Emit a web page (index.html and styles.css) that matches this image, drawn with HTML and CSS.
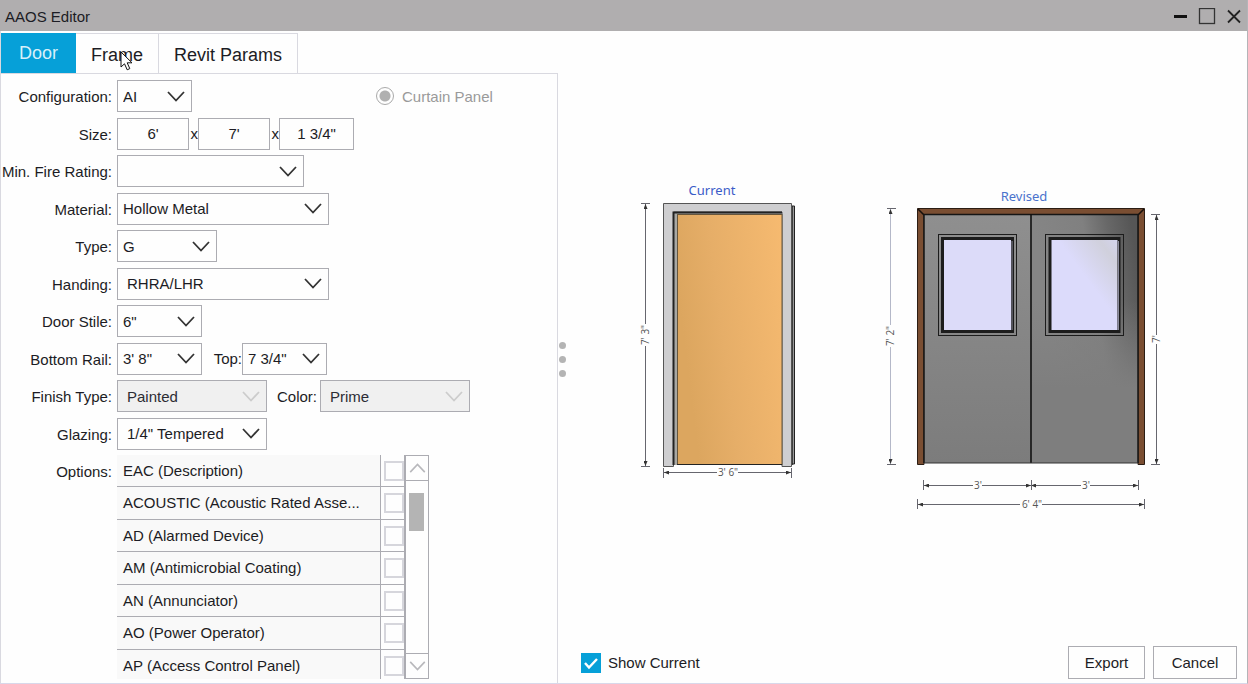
FILE: index.html
```html
<!DOCTYPE html>
<html lang="en">
<head>
    <meta charset="UTF-8">
    <meta name="viewport" content="width=device-width, initial-scale=1.0">
    <title>AAOS Editor</title>
    <link rel="stylesheet" href="styles.css">
</head>
<body>
    <svg class="defs" width="0" height="0" aria-hidden="true">
        <symbol id="chevron" viewBox="0 0 18 11">
            <path d="M1 1 L9 9.5 L17 1" fill="none" stroke="currentColor" stroke-width="1.8"/>
        </symbol>
        <symbol id="tick" viewBox="0 0 20 20">
            <path d="M4 10 L8 14.5 L16 6" fill="none" stroke="#fff" stroke-width="2.4"/>
        </symbol>
    </svg>

    <div class="window">
        <header class="titlebar">
            <h1>AAOS Editor</h1>
            <div class="window-buttons">
                <button type="button" aria-label="Minimize"><svg width="18" height="18" viewBox="0 0 18 18"><path d="M3 8.500H16" stroke="#111" stroke-width="3"/></svg></button>
                <button type="button" aria-label="Maximize"><svg width="18" height="18" viewBox="0 0 18 18"><rect x="1.5" y="0.5" width="15" height="15" fill="none" stroke="#333" stroke-width="1.3"/></svg></button>
                <button type="button" aria-label="Close"><svg width="18" height="18" viewBox="0 0 18 18"><path d="M3 2.500L15 14.500M15 2.500L3 14.500" stroke="#222" stroke-width="1.8"/></svg></button>
            </div>
        </header>

        <main class="content">
            <section class="editor">
                <nav class="tabs">
                    <button type="button" class="tab active">Door</button>
                    <button type="button" class="tab">Frame</button>
                    <button type="button" class="tab">Revit Params</button>
                </nav>

                <form class="door-form">
                    <label class="name" for="configuration">Configuration:</label>
                    <div class="field">
                        <div class="select w-xs"><select id="configuration"><option>AI</option></select><svg><use href="#chevron"/></svg></div>
                        <label class="radio"><input type="radio" name="panel" checked disabled>Curtain Panel</label>
                    </div>

                    <label class="name" for="width">Size:</label>
                    <div class="field">
                        <input class="size" type="text" id="width" value="6'">
                        <span class="times">x</span>
                        <input class="size" type="text" aria-label="Height" value="7'">
                        <span class="times">x</span>
                        <input class="size w-xs" type="text" aria-label="Thickness" value="1 3/4&quot;">
                    </div>

                    <label class="name" for="fire">Min. Fire Rating:</label>
                    <div class="field">
                        <div class="select w-lg"><select id="fire"><option></option></select><svg><use href="#chevron"/></svg></div>
                    </div>

                    <label class="name" for="material">Material:</label>
                    <div class="field">
                        <div class="select w-xl"><select id="material"><option>Hollow Metal</option></select><svg><use href="#chevron"/></svg></div>
                    </div>

                    <label class="name" for="type">Type:</label>
                    <div class="field">
                        <div class="select w-md"><select id="type"><option>G</option></select><svg><use href="#chevron"/></svg></div>
                    </div>

                    <label class="name" for="handing">Handing:</label>
                    <div class="field">
                        <div class="select indent w-xl"><select id="handing"><option>RHRA/LHR</option></select><svg><use href="#chevron"/></svg></div>
                    </div>

                    <label class="name" for="stile">Door Stile:</label>
                    <div class="field">
                        <div class="select w-sm"><select id="stile"><option>6"</option></select><svg><use href="#chevron"/></svg></div>
                    </div>

                    <label class="name" for="rail">Bottom Rail:</label>
                    <div class="field">
                        <div class="select w-sm"><select id="rail"><option>3' 8"</option></select><svg><use href="#chevron"/></svg></div>
                        <label class="second top" for="top">Top:</label>
                        <div class="select w-sm"><select id="top"><option>7 3/4"</option></select><svg><use href="#chevron"/></svg></div>
                    </div>

                    <label class="name" for="finish">Finish Type:</label>
                    <div class="field">
                        <div class="select indent disabled w-fin"><select id="finish" disabled><option>Painted</option></select><svg><use href="#chevron"/></svg></div>
                        <label class="second color" for="color">Color:</label>
                        <div class="select indent disabled w-fin"><select id="color" disabled><option>Prime</option></select><svg><use href="#chevron"/></svg></div>
                    </div>

                    <label class="name" for="glazing">Glazing:</label>
                    <div class="field">
                        <div class="select indent w-fin"><select id="glazing"><option>1/4" Tempered</option></select><svg><use href="#chevron"/></svg></div>
                    </div>

                    <span class="name">Options:</span>
                    <div class="options">
                        <ul>
                            <li><label for="o1">EAC (Description)</label><input type="checkbox" id="o1"></li>
                            <li><label for="o2">ACOUSTIC (Acoustic Rated Asse...</label><input type="checkbox" id="o2"></li>
                            <li><label for="o3">AD (Alarmed Device)</label><input type="checkbox" id="o3"></li>
                            <li><label for="o4">AM (Antimicrobial Coating)</label><input type="checkbox" id="o4"></li>
                            <li><label for="o5">AN (Annunciator)</label><input type="checkbox" id="o5"></li>
                            <li><label for="o6">AO (Power Operator)</label><input type="checkbox" id="o6"></li>
                            <li><label for="o7">AP (Access Control Panel)</label><input type="checkbox" id="o7"></li>
                        </ul>
                        <div class="scrollbar">
                            <button type="button" class="up" aria-label="Scroll up"><svg><use href="#chevron"/></svg></button>
                            <div class="track"><div class="thumb"></div></div>
                            <button type="button" class="down" aria-label="Scroll down"><svg><use href="#chevron"/></svg></button>
                        </div>
                    </div>
                </form>
            </section>

            <div class="splitter"><i></i><i></i><i></i></div>

            <section class="preview">
                <svg class="drawing" width="536" height="340" viewBox="634 175 536 340" role="img" aria-label="Current and revised door">
                    <defs>
                        <linearGradient id="wood" x1="0" y1="0.3" x2="1" y2="0">
                            <stop offset="0" stop-color="#dca65f"/>
                            <stop offset="0.35" stop-color="#e6ae68"/>
                            <stop offset="1" stop-color="#f6ba70"/>
                        </linearGradient>
                        <linearGradient id="steel" x1="0" y1="0" x2="0" y2="1">
                            <stop offset="0" stop-color="#8f8f8f"/>
                            <stop offset="1" stop-color="#7c7c7c"/>
                        </linearGradient>
                        <linearGradient id="shade" x1="0.2" y1="0.5" x2="1" y2="0.2">
                            <stop offset="0" stop-color="#858585"/>
                            <stop offset="0.5" stop-color="#808080"/>
                            <stop offset="0.75" stop-color="#686868"/>
                            <stop offset="1" stop-color="#565656"/>
                        </linearGradient>
                        <linearGradient id="fade" x1="0" y1="0" x2="0" y2="1">
                            <stop offset="0.35" stop-color="#808080" stop-opacity="0"/>
                            <stop offset="0.7" stop-color="#7e7e7e"/>
                        </linearGradient>
                        <linearGradient id="glass" x1="0" y1="1" x2="1" y2="0">
                            <stop offset="0.55" stop-color="#dcdbfb"/>
                            <stop offset="0.85" stop-color="#d0d0dc"/>
                            <stop offset="1" stop-color="#d4d4f0"/>
                        </linearGradient>
                        <marker id="arrow" viewBox="0 0 5 4" refX="5" refY="2" markerWidth="5" markerHeight="4" markerUnits="userSpaceOnUse" orient="auto-start-reverse">
                            <path d="M0 0L5 2L0 4z" fill="#333"/>
                        </marker>
                    </defs>

                    <!-- current door -->
                    <text class="caption" x="712" y="195">Current</text>
                    <path d="M791 206H794.5V464H791z" fill="#999" stroke="#222"/>
                    <path d="M792 206V465" stroke="#222" stroke-width="1.5"/>
                    <path d="M663.5 203.5H791.5V466.5H782V212H673.5V466.5H663.5z" fill="#ceced0" stroke="#555"/>
                    <rect x="674" y="212" width="108" height="253" fill="#a8a8a4"/>
                    <path d="M673.5 465V212.5H782" fill="none" stroke="#222" stroke-width="2"/>
                    <rect x="677.5" y="214.5" width="104.5" height="250" fill="url(#wood)" stroke="#66563d"/>
                    <path d="M677 464.5H782" stroke="#222"/>

                    <g class="dim">
                        <path d="M645.5 204V324" marker-start="url(#arrow)"/>
                        <path d="M645.5 346V466" marker-end="url(#arrow)"/>
                        <path d="M641 203.5H650M641 466.5H650"/>
                        <path d="M664 472.5H717" marker-start="url(#arrow)"/>
                        <path d="M738 472.5H791" marker-end="url(#arrow)"/>
                        <path d="M663.5 468V478M791.5 468V478"/>
                    </g>
                    <text class="measure" transform="translate(649 335) rotate(-90)">7' 3"</text>
                    <text class="measure" x="728" y="476">3' 6"</text>

                    <!-- revised door -->
                    <text class="caption light" x="1024" y="201">Revised</text>
                    <path d="M917.5 208.5H1144.5V464.5H1138V214.5H924V464.5H917.5z" fill="#7a4e32" stroke="#2b1d14"/>
                    <path d="M918 209L924 215M1144 209L1138 215" stroke="#17100b" stroke-width="1.5"/>
                    <rect x="924" y="214.5" width="107" height="248.5" fill="url(#steel)"/>
                    <rect x="1031" y="214.5" width="107" height="248.5" fill="url(#shade)"/>
                    <rect x="1031" y="214.5" width="107" height="248.5" fill="url(#fade)"/>
                    <path d="M924 463V214.5H1138V463" fill="none" stroke="#151515" stroke-width="1.5"/>
                    <path d="M1031 214V463" stroke="#111" stroke-width="1.6"/>
                    <path d="M924 463H1138" stroke="#333"/>
                    <g fill="none" stroke="#1c1c1c">
                        <rect x="938.5" y="234.5" width="78" height="101"/>
                        <rect x="1045.5" y="234.5" width="78" height="101"/>
                        <rect x="942.5" y="238.5" width="70" height="93" fill="#dcdbf9" stroke-width="3"/>
                        <rect x="1050" y="238.5" width="69" height="93" fill="url(#glass)" stroke-width="3"/>
                    </g>
                    <path d="M1012 241V330M1118.5 241V330" stroke="#8b8b9c"/>

                    <g class="dim pale">
                        <path d="M890.5 209V325" marker-start="url(#arrow)"/>
                        <path d="M890.5 347V464" marker-end="url(#arrow)"/>
                    </g>
                    <g class="dim">
                        <path d="M887 208.5H896M887 464.5H896"/>
                        <path d="M1156.5 215V335" marker-start="url(#arrow)"/>
                        <path d="M1156.5 344V464" marker-end="url(#arrow)"/>
                        <path d="M1151 214.5H1160M1151 464.5H1160"/>
                        <path d="M924 485.5H973" marker-start="url(#arrow)"/>
                        <path d="M982 485.5H1031" marker-end="url(#arrow)"/>
                        <path d="M1031 485.5H1081" marker-start="url(#arrow)"/>
                        <path d="M1090 485.5H1138" marker-end="url(#arrow)"/>
                        <path d="M923.5 480V490M1031.5 480V490M1138.5 480V490"/>
                        <path d="M918 504.5H1020" marker-start="url(#arrow)"/>
                        <path d="M1042 504.5H1144" marker-end="url(#arrow)"/>
                        <path d="M917.5 499V509M1144.5 499V509"/>
                    </g>
                    <text class="measure" transform="translate(894 336) rotate(-90)">7' 2"</text>
                    <text class="measure" transform="translate(1160 339) rotate(-90)">7'</text>
                    <text class="measure" x="978" y="489">3'</text>
                    <text class="measure" x="1086" y="489">3'</text>
                    <text class="measure" x="1032" y="508">6' 4"</text>
                </svg>

                <footer class="actions">
                    <label class="show-current">
                        <span class="tickbox"><input type="checkbox" checked><svg><use href="#tick"/></svg></span>
                        Show Current
                    </label>
                    <button type="button" class="export">Export</button>
                    <button type="button" class="cancel">Cancel</button>
                </footer>
            </section>
        </main>
    </div>

    <svg class="pointer" width="13" height="20" viewBox="0 0 13 20" aria-hidden="true">
        <path d="M1 1V16L4.5 12.8L7.2 18.8L9.8 17.6L7.2 11.8H12z" fill="#fff" stroke="#111"/>
    </svg>
</body>
</html>
```

FILE: styles.css
```css
* {
    box-sizing: border-box;
}
body {
    margin: 0;
    font-family: "Liberation Sans", Arial, sans-serif;
    font-size: 15px;
    color: #1c1c24;
    background: #fefefe;
}
button, input, select {
    font: inherit;
    color: inherit;
    margin: 0;
}
.defs {
    position: absolute;
}
.window {
    display: flex;
    flex-direction: column;
    min-height: 100vh;
    border-right: 1px solid #b4b4b8;
    border-bottom: 1px solid #d8d8ea;
}

/* title bar */
.titlebar {
    display: flex;
    align-items: center;
    justify-content: space-between;
    height: 31px;
    padding: 2px 4px 0 5px;
    background: #b0aeaf;
}
.titlebar h1 {
    margin: 0;
    font-size: 15px;
    font-weight: normal;
}
.window-buttons {
    display: flex;
    gap: 9px;
}
.window-buttons button {
    display: flex;
    padding: 0;
    border: none;
    background: none;
}

.content {
    display: flex;
    flex: 1;
}
.editor {
    display: flex;
    flex-direction: column;
    width: 558px;
    padding-top: 2px;
    border-left: 1px solid #d9d9e0;
}

/* tabs */
.tabs {
    display: flex;
    height: 40px;
}
.tab {
    padding: 4px 15px 0;
    border: 1px solid #d9d9e0;
    border-left: none;
    border-bottom: none;
    background: #fefefe;
    font-size: 18px;
}
.tab.active {
    padding: 0 18px;
    border: none;
    background: #06a0d8;
    color: #d8f0fa;
}

/* form */
.door-form {
    display: grid;
    grid-template-columns: 111px 1fr;
    grid-template-rows: repeat(10, 1fr) 228px;
    column-gap: 5px;
    flex: 1;
    padding-top: 6px;
    border: 1px solid #d9d9e0;
    border-width: 1px 1px 0 0;
}
.name {
    line-height: 34px;
    text-align: right;
    white-space: nowrap;
}
.field {
    display: flex;
    align-items: center;
    height: 32px;
}
.select {
    display: grid;
    align-items: center;
    height: 32px;
}
.select select {
    grid-area: 1 / 1;
    width: 100%;
    height: 32px;
    padding: 0 5px;
    appearance: none;
    border: 1px solid #acacb2;
    border-radius: 0;
    background: #fefefe;
}
.select svg {
    grid-area: 1 / 1;
    justify-self: end;
    width: 18px;
    height: 11px;
    margin-right: 7px;
    color: #333;
    pointer-events: none;
}
.select.indent select {
    padding-left: 9px;
}
.select.disabled select {
    background: #f0f0f0;
    color: #2c2c34;
    opacity: 1;
}
.select.disabled svg {
    color: #ccc;
}
.size {
    width: 72px;
    height: 32px;
    padding: 0;
    border: 1px solid #acacb2;
    background: #fefefe;
    text-align: center;
}
.w-xs { width: 75px; }
.w-sm { width: 85px; }
.w-md { width: 100px; }
.w-fin { width: 150px; }
.w-lg { width: 187px; }
.w-xl { width: 212px; }
.times {
    width: 9px;
    text-align: right;
}
.second {
    text-align: right;
}
.second.top {
    width: 40px;
}
.second.color {
    width: 53px;
    padding-right: 3px;
}
.radio {
    display: flex;
    align-items: center;
    gap: 8px;
    margin-left: 184px;
    color: #9a9a9a;
}
.radio input {
    width: 18px;
    height: 18px;
    appearance: none;
    border: 1px solid #aaa;
    border-radius: 50%;
    background: radial-gradient(circle, #b0b0b0 5px, #fefefe 6px);
}

/* options list */
.options {
    display: flex;
    height: 224px;
}
.options ul {
    width: 287px;
    margin: 0;
    padding: 0;
    overflow: hidden;
    list-style: none;
}
.options li {
    display: flex;
    align-items: center;
    height: 33px;
    border-bottom: 1px solid #acacb2;
}
.options li:nth-child(odd) {
    height: 32px;
}
.options label {
    flex: 1;
    height: 100%;
    padding-left: 6px;
    border-right: 1px solid #acacb2;
    background: #f9f9f9;
    line-height: 32px;
}
.options input {
    width: 20px;
    height: 20px;
    margin-left: 3px;
    appearance: none;
    border: 2px solid #d6d6dc;
    background: #fefefe;
}
.scrollbar {
    display: flex;
    flex-direction: column;
    width: 25px;
    border: 1px solid #acacb2;
    border-left-width: 2px;
}
.scrollbar button {
    display: flex;
    align-items: center;
    justify-content: center;
    height: 25px;
    padding: 0;
    border: none;
    border-bottom: 1px solid #acacb2;
    background: #fefefe;
    color: #b8b8bc;
}
.scrollbar .down {
    border-bottom: none;
    border-top: 1px solid #acacb2;
}
.scrollbar svg {
    width: 17px;
    height: 10px;
}
.scrollbar .up svg {
    transform: rotate(180deg);
}
.track {
    flex: 1;
    padding: 12px 4px 0 3px;
}
.thumb {
    height: 38px;
    background: #b4b4b4;
}

/* splitter */
.splitter {
    display: flex;
    flex-direction: column;
    align-items: flex-end;
    justify-content: center;
    gap: 7px;
    width: 8px;
    padding-top: 4px;
}
.splitter i {
    width: 7px;
    height: 7px;
    border-radius: 50%;
    background: #b4b4b4;
}

/* preview */
.preview {
    display: flex;
    flex-direction: column;
    flex: 1;
    justify-content: space-between;
    align-items: center;
    padding-top: 144px;
}
.drawing {
    margin-right: 10px;
}
.caption {
    font-family: "Noto Sans", "Open Sans", sans-serif;
    font-size: 13px;
    fill: #3a5cc8;
    text-anchor: middle;
}
.caption.light {
    fill: #4a72cc;
}
.measure {
    font-family: "Open Sans", sans-serif;
    font-size: 10px;
    fill: #555;
    text-anchor: middle;
}
.dim {
    fill: none;
    stroke: #66666e;
}
.dim.pale {
    stroke: #b4b8c8;
}
.actions {
    display: flex;
    align-items: center;
    gap: 8px;
    width: 100%;
    padding: 0 10px 4px 15px;
}
.show-current {
    display: flex;
    align-items: center;
    gap: 7px;
    margin-right: auto;
}
.tickbox {
    display: grid;
}
.tickbox input {
    grid-area: 1 / 1;
    width: 20px;
    height: 20px;
    appearance: none;
    border: 1px solid #06a0d8;
}
.tickbox input:checked {
    background: #06a0d8;
}
.tickbox svg {
    grid-area: 1 / 1;
    width: 20px;
    height: 20px;
    pointer-events: none;
}
.actions button {
    width: 84px;
    height: 33px;
    padding: 0;
    border: 1px solid #acacb2;
    background: #fefefe;
}
.actions .export {
    width: 77px;
}

/* mouse pointer */
.pointer {
    position: absolute;
    left: 120px;
    top: 51px;
    pointer-events: none;
}
```
